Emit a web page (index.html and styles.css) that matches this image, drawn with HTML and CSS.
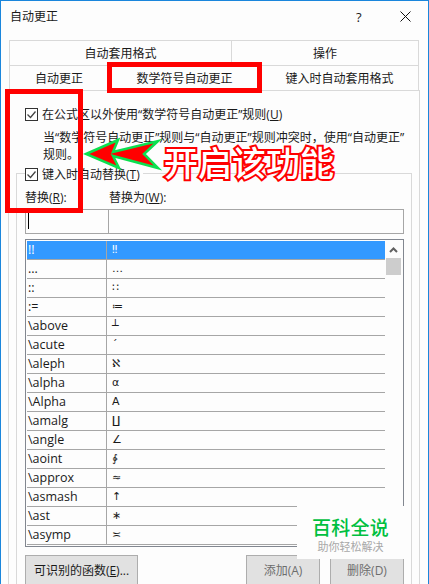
FILE: index.html
```html
<!DOCTYPE html>
<html lang="zh-CN">
<head>
<meta charset="utf-8">
<title>自动更正</title>
<link rel="stylesheet" href="styles.css">
</head>
<body>
<div class="window">
  <header class="titlebar">
    <span class="title">自动更正</span>
    <span class="help">?</span>
    <svg class="close" width="11" height="11" viewBox="0 0 11 11"><path d="M.5.5l10 10M10.500.5l-10 10" stroke="#111" fill="none"/></svg>
  </header>

  <div class="tabs tabs-top">
    <div class="tab tab-a">自动套用格式</div>
    <div class="tab tab-b">操作</div>
  </div>
  <div class="tabs tabs-bottom">
    <div class="tab tab-c">自动更正</div>
    <div class="tab tab-d">数学符号自动更正</div>
    <div class="tab tab-e">键入时自动套用格式</div>
  </div>

  <section class="panel">
    <label class="check-row first">
      <svg class="check" width="13" height="13" viewBox="0 0 13 13"><rect x=".5" y=".5" width="12" height="12" fill="#fff" stroke="#333"/><path d="M2.500 6.500l3 3 5-6" stroke="#444" stroke-width="1.300" fill="none"/></svg>
      <span class="check-text">在公式区以外使用“数学符号自动更正”规则(<u>U</u>)</span>
    </label>
    <p class="note">当“数学符号自动更正”规则与“自动更正”规则冲突时，使用“自动更正”规则。</p>

    <div class="group">
      <label class="check-row legend">
        <svg class="check" width="13" height="13" viewBox="0 0 13 13"><rect x=".5" y=".5" width="12" height="12" fill="#fff" stroke="#333"/><path d="M2.500 6.500l3 3 5-6" stroke="#444" stroke-width="1.300" fill="none"/></svg>
        <span class="check-text">键入时自动替换(<u>T</u>)</span>
      </label>
      <div class="field-labels">
        <span class="label-a">替换(<u>R</u>):</span>
        <span>替换为(<u>W</u>):</span>
      </div>
      <div class="inputs">
        <div class="input-a"><i class="caret"></i></div>
        <div class="input-b"></div>
      </div>
      <div class="list">
        <div class="rows">
          <div class="row selected"><span class="c1">!!</span><span class="c2">‼</span></div>
          <div class="row"><span class="c1">...</span><span class="c2">…</span></div>
          <div class="row"><span class="c1">::</span><span class="c2">∷</span></div>
          <div class="row"><span class="c1">:=</span><span class="c2">≔</span></div>
          <div class="row"><span class="c1">\above</span><span class="c2">┴</span></div>
          <div class="row"><span class="c1">\acute</span><span class="c2">´</span></div>
          <div class="row"><span class="c1">\aleph</span><span class="c2">ℵ</span></div>
          <div class="row"><span class="c1">\alpha</span><span class="c2">α</span></div>
          <div class="row"><span class="c1">\Alpha</span><span class="c2">Α</span></div>
          <div class="row"><span class="c1">\amalg</span><span class="c2">∐</span></div>
          <div class="row"><span class="c1">\angle</span><span class="c2">∠</span></div>
          <div class="row"><span class="c1">\aoint</span><span class="c2">∳</span></div>
          <div class="row"><span class="c1">\approx</span><span class="c2">≈</span></div>
          <div class="row"><span class="c1">\asmash</span><span class="c2">↑</span></div>
          <div class="row"><span class="c1">\ast</span><span class="c2">∗</span></div>
          <div class="row"><span class="c1">\asymp</span><span class="c2">≍</span></div>
        </div>
        <div class="scrollbar">
          <svg class="scroll-up" width="9" height="6" viewBox="0 0 9 6"><path d="M1 5l3.500-3.500L8 5" stroke="#606060" stroke-width="2" fill="none"/></svg>
          <div class="thumb"></div>
        </div>
      </div>
      <div class="buttons">
        <button class="btn btn-funcs">可识别的函数(<u>E</u>)...</button>
        <button class="btn btn-off btn-add">添加(A)</button>
        <button class="btn btn-off btn-del">删除(D)</button>
      </div>
    </div>
  </section>

  <div class="mark mark-tab"></div>
  <div class="mark mark-left"></div>
  <svg class="arrows" width="80" height="36" viewBox="0 0 80 36"><path d="M3 18L35 4 30 16 75 5 61 18 75 32 30 20 36 32Z" fill="#f00" stroke="#0be04f" stroke-width="2.500" stroke-linejoin="miter" stroke-miterlimit="8"/></svg>
  <div class="callout">开启该功能</div>
  <div class="brand">
    <div class="brand-name">百科全说</div>
    <div class="brand-sub">助你轻松解决</div>
  </div>
</div>
</body>
</html>
```

FILE: styles.css
```css
* { box-sizing: border-box; }
html, body { margin: 0; padding: 0; }
body {
  font-family: "Open Sans", "Noto Sans CJK SC", sans-serif;
  font-size: 12px;
  color: #1a1a1a;
}
u { text-underline-offset: 1px; }
.window {
  position: relative;
  width: 429px;
  height: 584px;
  overflow: hidden;
  background: #fdfdfd;
  border: 1px solid #1a86dc;
  border-bottom: 0;
}
.titlebar {
  position: relative;
  display: flex;
  align-items: center;
  height: 39px;
  padding: 0 17px 8px 9px;
}
.title { flex: 1; font-size: 12px; line-height: 16px; }
.help { width: 44px; font-size: 13px; line-height: 16px; }
.close { display: block; }

.tabs { display: flex; margin-left: 8px; width: 410px; height: 25px; }
.tab {
  display: flex;
  align-items: center;
  justify-content: center;
  padding-top: 2px;
  border-top: 1px solid #d9d9d9;
  border-right: 1px solid #d9d9d9;
  line-height: 16px;
}
.tab-a { width: 223px; border-left: 1px solid #d9d9d9; }
.tab-b { width: 187px; }
.tab-c { width: 100px; border-left: 1px solid #d9d9d9; }
.tab-d { width: 152px; }
.tab-e { width: 158px; }

.panel {
  margin-left: 7px;
  width: 412px;
  height: 520px;
  padding: 15px 8px 0 7px;
  border: 1px solid #d9d9d9;
}
.check-row { display: flex; align-items: center; gap: 4px; height: 16px; line-height: 16px; }
.check-row.first { margin-left: 9px; }
.check { display: block; flex: none; }
.check-text { padding-top: 2px; }
.note {
  margin: 7px 0 0 27px;
  width: 372px;
  line-height: 17px;
}
.group {
  margin-top: 10px;
  width: 396px;
  height: 420px;
  padding: 0 8px;
  border: 1px solid #d9d9d9;
}
.legend {
  margin-top: -8px;
  width: max-content;
  padding-right: 3px;
  background: #fdfdfd;
}
.field-labels { display: flex; margin-top: 8px; line-height: 16px; }
.label-a { width: 84px; }
.inputs {
  display: flex;
  margin-top: 3px;
  width: 379px;
  height: 25px;
  border: 1px solid #a6a6a6;
}
.input-a { width: 83px; padding: 2px 0 0 2px; border-right: 1px solid #a6a6a6; }
.caret { display: block; width: 1px; height: 17px; background: #000; }
.input-b { flex: 1; }
.list {
  display: flex;
  margin-top: 5px;
  width: 379px;
  height: 308px;
  padding: 1px;
  border: 1px solid #828790;
}
.rows { width: 359px; }
.row { display: flex; height: 19px; border-bottom: 1px solid #a6a6a6; line-height: 18px; }
.c1 { width: 80px; padding-left: 1px; border-right: 1px solid #a6a6a6; font-size: 12.500px; }
.c2 { padding-left: 5px; font-family: "DejaVu Sans", sans-serif; font-size: 11px; }
.selected { background: #3399ff; color: #fff; }
.scrollbar { width: 17px; padding: 0 0 0 1px; }
.scroll-up { display: block; margin: 6px 0 5px 3px; }
.thumb { width: 15px; height: 17px; background: #cdcdcd; }
.buttons { display: flex; gap: 10px; margin-top: 8px; width: 379px; }
.btn {
  height: 30px;
  padding: 0 0 1px;
  font: inherit;
  color: #1a1a1a;
  background: #e1e1e1;
  border: 1px solid #adadad;
  border-radius: 0;
}
.btn-funcs { width: 113px; margin-right: auto; }
.btn-off { width: 74px; color: #6d6d6d; }

.mark { position: absolute; border: 5px solid #f00; }
.mark-tab { left: 106px; top: 61px; width: 155px; height: 31px; }
.mark-left { left: 4px; top: 88px; width: 78px; height: 124px; }
.arrows { position: absolute; left: 82px; top: 135px; }
.callout {
  position: absolute;
  left: 163px;
  top: 139px;
  font-size: 34px;
  line-height: 46px;
  font-weight: 500;
  white-space: nowrap;
  color: #fff;
  -webkit-text-stroke: 4px #f00;
  paint-order: stroke fill;
}
.brand {
  position: absolute;
  left: 296px;
  top: 505px;
  width: 107px;
  height: 53px;
  padding-top: 10px;
  background: #fdfdfd;
  text-align: center;
}
.brand-name { font-size: 19px; line-height: 24px; font-weight: 500; color: #00c040; letter-spacing: .3px; }
.brand-sub { font-size: 11px; line-height: 14px; color: #a8a8a8; }
```
